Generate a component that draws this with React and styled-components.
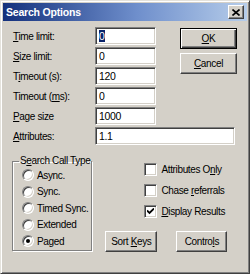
import styled, { createGlobalStyle } from "styled-components";

const GlobalStyle = createGlobalStyle`
  body {
    margin: 0;
    background: #d4d0c8;
  }
`;

const Window = styled.div`
  width: 250px;
  height: 274px;
  box-sizing: border-box;
  background: #d4d0c8;
  border: 1px solid;
  border-color: #e4e2dc #404040 #404040 #e4e2dc;
  box-shadow: inset 1px 1px #fff, inset -1px -1px #808080;
  padding: 2px;
  display: flex;
  flex-direction: column;
  font-family: "Liberation Sans", Arial, sans-serif;
  font-size: 10px;
  letter-spacing: -0.35px;
  color: #000;
`;

const TitleBar = styled.div`
  height: 18px;
  flex: none;
  display: flex;
  align-items: center;
  justify-content: space-between;
  padding: 0 3px 0 3px;
  background: linear-gradient(to right, #13307c, #6f8fcc 55%, #b6cdea);
  color: #fff;
  font-weight: bold;
  font-size: 10.5px;
  letter-spacing: -0.2px;
`;

const CloseButton = styled.div`
  width: 14px;
  height: 12px;
  background: #d4d0c8;
  border: 1px solid;
  border-color: #fff #404040 #404040 #fff;
  box-shadow: inset -1px -1px #808080;
  display: flex;
  align-items: center;
  justify-content: center;
`;

const Content = styled.div`
  flex: 1;
  display: flex;
  flex-direction: column;
  padding: 6px 10px 0 10px;
`;

const TopSection = styled.div`
  display: flex;
  align-items: flex-start;
`;

const FieldGrid = styled.div`
  display: grid;
  grid-template-columns: 82px ${(p) => p.$inputWidth}px;
  grid-auto-rows: 18px;
  row-gap: 2px;
  align-items: center;
  margin-top: ${(p) => p.$top || 0}px;
`;

const Label = styled.span`
  white-space: nowrap;
`;

const TextBox = styled.div`
  height: 18px;
  box-sizing: border-box;
  background: #fff;
  border: 1px solid;
  border-color: #808080 #fff #fff #808080;
  box-shadow: inset 1px 1px #404040, inset -1px -1px #d4d0c8;
  padding: 0 3px;
  display: flex;
  align-items: center;
  white-space: nowrap;
  font-size: 10.5px;
`;

const Selected = styled.span`
  background: #0a246a;
  color: #fff;
`;

const ButtonStack = styled.div`
  margin-left: auto;
  margin-top: 1px;
  display: flex;
  flex-direction: column;
  gap: 4px;
`;

const Button = styled.div`
  width: ${(p) => p.$width}px;
  height: 21px;
  box-sizing: border-box;
  background: #d4d0c8;
  display: flex;
  align-items: center;
  justify-content: center;
  white-space: nowrap;
  border: 1px solid;
  border-color: ${(p) => (p.$default ? "#000" : "#fff #404040 #404040 #fff")};
  box-shadow: ${(p) =>
    p.$default
      ? "inset 1px 1px #fff, inset -1px -1px #404040, inset -2px -2px #808080"
      : "inset -1px -1px #808080"};
`;

const BottomSection = styled.div`
  display: flex;
  margin-top: 10px;
`;

const GroupBox = styled.fieldset`
  margin: 0 0 0 -1px;
  width: 80px;
  height: 96px;
  box-sizing: border-box;
  padding: 0 0 0 9px;
  border: 1px solid #808080;
  box-shadow: 1px 1px #fff, inset 1px 1px #fff;
  display: flex;
  flex-direction: column;
`;

const Legend = styled.legend`
  padding: 0 1px;
  margin-left: -3px;
  line-height: 12px;
  white-space: nowrap;
`;

const RadioRow = styled.div`
  height: 16.5px;
  display: flex;
  align-items: center;
  gap: 3px;
  white-space: nowrap;
`;

const Radio = styled.span`
  flex: none;
  width: 12px;
  height: 12px;
  box-sizing: border-box;
  border-radius: 50%;
  border: 1px solid;
  border-color: #808080 #fff #fff #808080;
  box-shadow: inset 1px 1px #404040, inset -1px -1px #d4d0c8;
  background: #fff;
  display: flex;
  align-items: center;
  justify-content: center;

  &::after {
    content: "";
    width: 4px;
    height: 4px;
    border-radius: 50%;
    background: ${(p) => (p.$checked ? "#000" : "transparent")};
  }
`;

const RightColumn = styled.div`
  flex: 1;
  display: flex;
  flex-direction: column;
`;

const CheckList = styled.div`
  padding-left: 52px;
  margin-top: 4px;
  display: flex;
  flex-direction: column;
`;

const CheckRow = styled.div`
  height: 21px;
  display: flex;
  align-items: center;
  gap: 4px;
  white-space: nowrap;
`;

const CheckBox = styled.span`
  flex: none;
  width: 13px;
  height: 13px;
  box-sizing: border-box;
  background: #fff;
  border: 1px solid;
  border-color: #808080 #fff #fff #808080;
  box-shadow: inset 1px 1px #404040, inset -1px -1px #d4d0c8;
  display: flex;
  align-items: center;
  justify-content: center;
`;

const ButtonRow = styled.div`
  display: flex;
  gap: 19px;
  margin: 9px 0 0 13px;
`;

const Check = () => (
  <svg width="7" height="7" viewBox="0 0 7 7">
    <path d="M0 2.5 L2.5 5 L7 0.5" fill="none" stroke="#000" strokeWidth="1.8" />
  </svg>
);

const fields = [
  { label: <><u>T</u>ime limit:</>, value: <Selected>0</Selected> },
  { label: <><u>S</u>ize limit:</>, value: "0" },
  { label: <>T<u>i</u>meout (s):</>, value: "120" },
  { label: <>Timeout (<u>m</u>s):</>, value: "0" },
  { label: <><u>P</u>age size</>, value: "1000" },
];

const radios = [
  { label: "Async.", checked: false },
  { label: "Sync.", checked: false },
  { label: "Timed Sync.", checked: false },
  { label: "Extended", checked: false },
  { label: "Paged", checked: true },
];

const checks = [
  { label: <>Attributes O<u>n</u>ly</>, checked: false },
  { label: <>Chase <u>r</u>eferrals</>, checked: false },
  { label: <><u>D</u>isplay Results</>, checked: true },
];

export default function App() {
  return (
    <>
      <GlobalStyle />
      <Window>
        <TitleBar>
          <span>Search Options</span>
          <CloseButton>
            <svg width="8" height="7" viewBox="0 0 8 7">
              <path d="M0.5 0.5 L7.5 6.5 M7.5 0.5 L0.5 6.5" stroke="#000" strokeWidth="1.6" />
            </svg>
          </CloseButton>
        </TitleBar>
        <Content>
          <TopSection>
            <FieldGrid $inputWidth={61}>
              {fields.map((f, i) => [
                <Label key={"l" + i}>{f.label}</Label>,
                <TextBox key={"v" + i}>{f.value}</TextBox>,
              ])}
            </FieldGrid>
            <ButtonStack>
              <Button $width={57} $default>
                <span><u>O</u>K</span>
              </Button>
              <Button $width={57}>
                <span><u>C</u>ancel</span>
              </Button>
            </ButtonStack>
          </TopSection>
          <FieldGrid $inputWidth={140} $top={2}>
            <Label><u>A</u>ttributes:</Label>
            <TextBox>1.1</TextBox>
          </FieldGrid>
          <BottomSection>
            <GroupBox>
              <Legend>S<u>e</u>arch Call Type</Legend>
              {radios.map((r) => (
                <RadioRow key={r.label}>
                  <Radio $checked={r.checked} />
                  <span>{r.label}</span>
                </RadioRow>
              ))}
            </GroupBox>
            <RightColumn>
              <CheckList>
                {checks.map((c, i) => (
                  <CheckRow key={i}>
                    <CheckBox>{c.checked && <Check />}</CheckBox>
                    <span>{c.label}</span>
                  </CheckRow>
                ))}
              </CheckList>
              <ButtonRow>
                <Button $width={52}>
                  <span>Sort <u>K</u>eys</span>
                </Button>
                <Button $width={51}>
                  <span>Contro<u>l</u>s</span>
                </Button>
              </ButtonRow>
            </RightColumn>
          </BottomSection>
        </Content>
      </Window>
    </>
  );
}
